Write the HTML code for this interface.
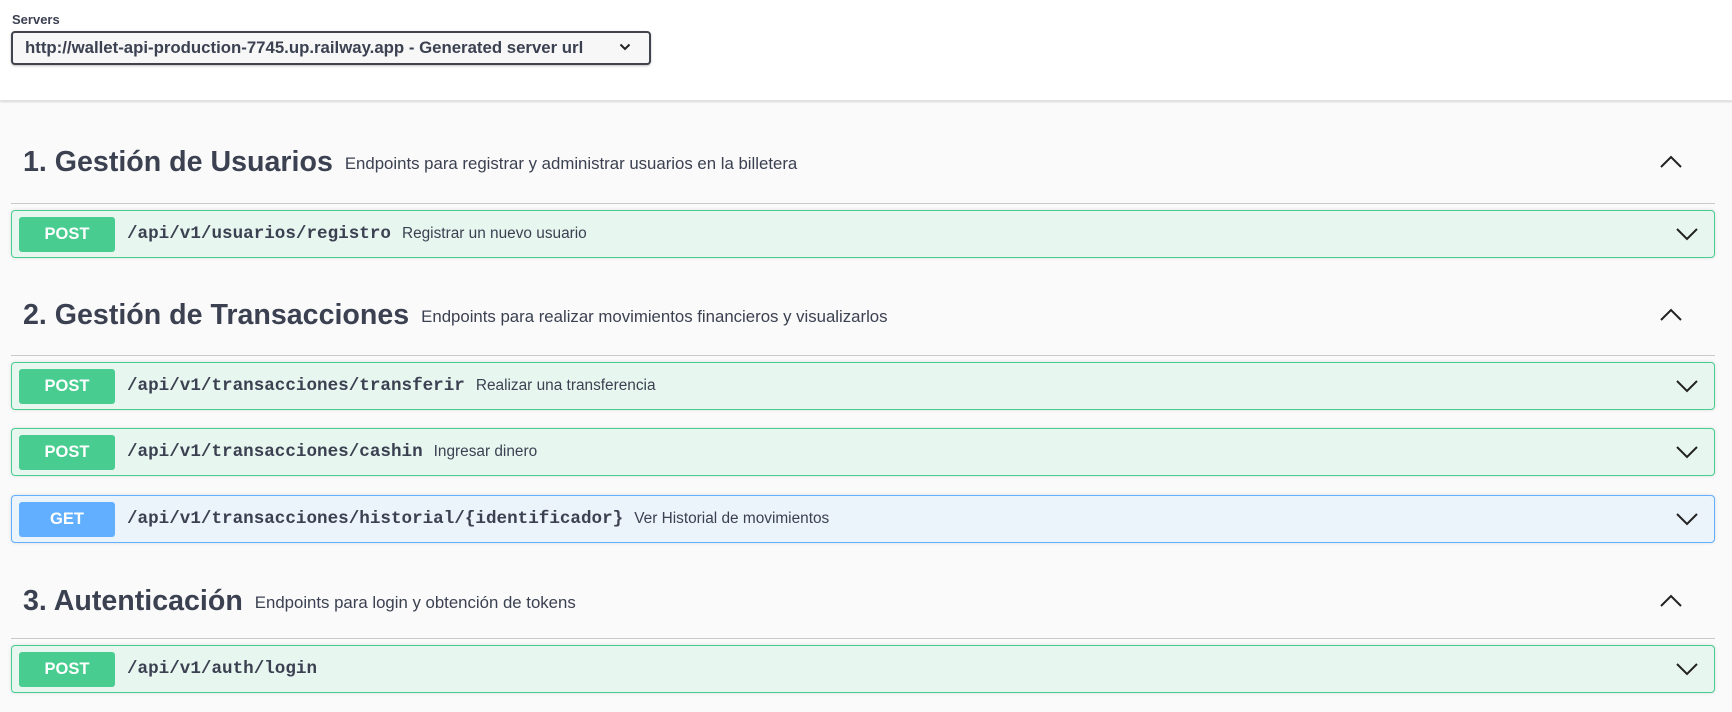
<!DOCTYPE html>
<html><head><meta charset="utf-8"><style>
*{margin:0;padding:0;box-sizing:border-box}
body{width:1732px;height:712px;background:#fafafa;font-family:"Liberation Sans",Arial,sans-serif;color:#3b4151;position:relative;overflow:hidden}
.top{position:absolute;left:0;top:0;width:1732px;height:101px;background:#fff;box-shadow:0 1px 2px rgba(0,0,0,.15);border-bottom:1px solid #e3e3e3}
.lbl{position:absolute;left:12px;top:12px;font-size:13px;font-weight:bold;color:#3b4151}
.sel{position:absolute;left:11px;top:31px;width:640px;height:34px;border:2px solid #41444e;border-radius:4px;background:#f7f7f7;box-shadow:0 1px 2px rgba(0,0,0,.25);font-size:16.8px;font-weight:bold;line-height:30px;padding-left:12px;color:#3b4151;white-space:nowrap}
.sel svg{position:absolute;right:18px;top:10px}
.h{position:absolute;left:23px;display:flex;align-items:baseline;white-space:nowrap}
.h b{font-size:28.6px;font-weight:bold;color:#3b4151}
.h span{font-size:16.8px;margin-left:12px;color:#3b4151;position:relative;top:-2px}
.sep{position:absolute;left:11px;width:1704px;height:1px;background:#c9c9c9}
.up{position:absolute;left:1660px}
.row{position:absolute;left:11px;width:1704px;height:48px;border:1px solid #49cc90;background:#e8f6f0;border-radius:4px;box-shadow:0 0 3px rgba(0,0,0,.12)}
.row.get{border-color:#61affe;background:#ebf3fb}
.m{position:absolute;left:7px;top:6px;width:96px;height:35px;border-radius:3px;background:#49cc90;color:#fff;font-weight:bold;font-size:16.5px;text-align:center;line-height:35px}
.get .m{background:#61affe}
.p{position:absolute;left:115px;top:0;line-height:46px;white-space:nowrap;display:flex;align-items:baseline}
.p code{font-family:"Liberation Mono","DejaVu Sans Mono",monospace;font-weight:bold;font-size:17.6px;color:#3b4151}
.p span{font-size:15.4px;margin-left:11px;color:#3b4151}
.dn{position:absolute;right:16px;top:17px}
</style></head><body>
<div class="top">
<div class="lbl">Servers</div>
<div class="sel">http://wallet-api-production-7745.up.railway.app - Generated server url<svg width="12" height="8" viewBox="0 0 12 8"><path d="M1.5 1.5L6 6 10.5 1.5" fill="none" stroke="#222" stroke-width="2"/></svg></div>
</div>

<div class="h" style="top:146px"><b>1. Gestión de Usuarios</b><span>Endpoints para registrar y administrar usuarios en la billetera</span></div>
<svg class="up" style="top:155px" width="22" height="13" viewBox="0 0 22 13"><path d="M1 12L11 2 21 12" fill="none" stroke="#222" stroke-width="2"/></svg>
<div class="sep" style="top:203px"></div>
<div class="row" style="top:210px"><div class="m">POST</div><div class="p"><code>/api/v1/usuarios/registro</code><span>Registrar un nuevo usuario</span></div><svg class="dn" width="22" height="13" viewBox="0 0 22 13"><path d="M1 1L11 11 21 1" fill="none" stroke="#222" stroke-width="2"/></svg></div>

<div class="h" style="top:299px"><b>2. Gestión de Transacciones</b><span>Endpoints para realizar movimientos financieros y visualizarlos</span></div>
<svg class="up" style="top:308px" width="22" height="13" viewBox="0 0 22 13"><path d="M1 12L11 2 21 12" fill="none" stroke="#222" stroke-width="2"/></svg>
<div class="sep" style="top:355px"></div>
<div class="row" style="top:362px"><div class="m">POST</div><div class="p"><code>/api/v1/transacciones/transferir</code><span>Realizar una transferencia</span></div><svg class="dn" width="22" height="13" viewBox="0 0 22 13"><path d="M1 1L11 11 21 1" fill="none" stroke="#222" stroke-width="2"/></svg></div>
<div class="row" style="top:428px"><div class="m">POST</div><div class="p"><code>/api/v1/transacciones/cashin</code><span>Ingresar dinero</span></div><svg class="dn" width="22" height="13" viewBox="0 0 22 13"><path d="M1 1L11 11 21 1" fill="none" stroke="#222" stroke-width="2"/></svg></div>
<div class="row get" style="top:495px"><div class="m">GET</div><div class="p"><code>/api/v1/transacciones/historial/{identificador}</code><span>Ver Historial de movimientos</span></div><svg class="dn" width="22" height="13" viewBox="0 0 22 13"><path d="M1 1L11 11 21 1" fill="none" stroke="#222" stroke-width="2"/></svg></div>

<div class="h" style="top:585px"><b>3. Autenticación</b><span>Endpoints para login y obtención de tokens</span></div>
<svg class="up" style="top:594px" width="22" height="13" viewBox="0 0 22 13"><path d="M1 12L11 2 21 12" fill="none" stroke="#222" stroke-width="2"/></svg>
<div class="sep" style="top:638px"></div>
<div class="row" style="top:645px"><div class="m">POST</div><div class="p"><code>/api/v1/auth/login</code></div><svg class="dn" width="22" height="13" viewBox="0 0 22 13"><path d="M1 1L11 11 21 1" fill="none" stroke="#222" stroke-width="2"/></svg></div>
</body></html>
